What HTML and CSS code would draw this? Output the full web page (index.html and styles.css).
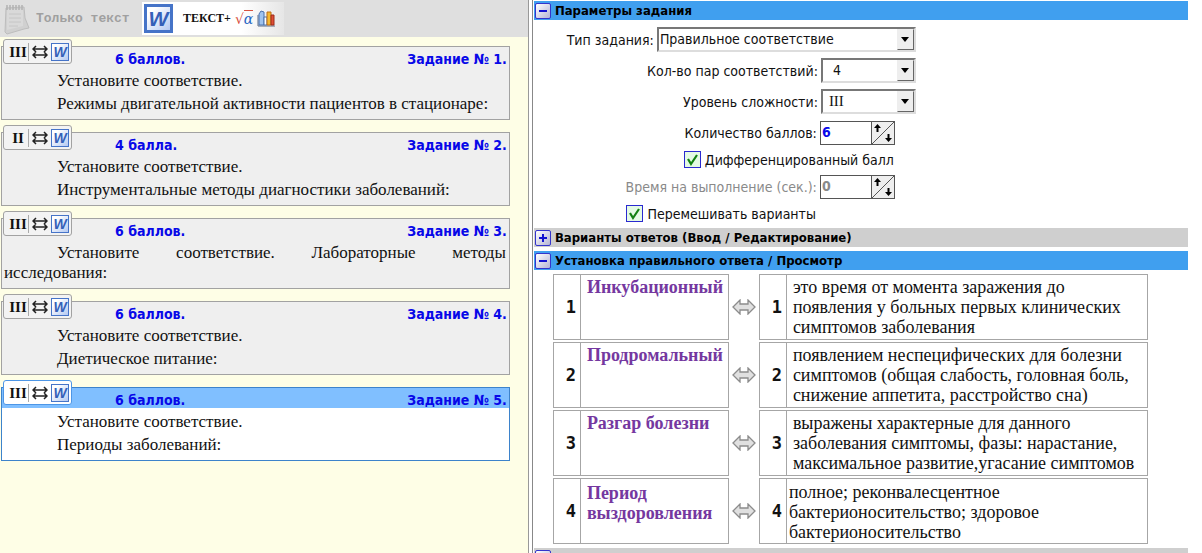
FILE: index.html
```html
<!DOCTYPE html>
<html lang="ru">
<head>
  <meta charset="UTF-8">
  <meta name="viewport" content="width=device-width, initial-scale=1.0">
  <title>Редактор тестов</title>
  <link rel="stylesheet" href="styles.css">
</head>
<body>

  <!-- Shared icons -->
  <svg class="sprite" width="0" height="0" aria-hidden="true">
    <symbol id="match" viewBox="0 0 16 14">
      <path d="M1 4h14M4 1L1 4l3 3M12 1l3 3-3 3M1 10h14M4 7L1 10l3 3M12 7l3 3-3 3" fill="none" stroke="#222" stroke-width="1.500"></path>
    </symbol>
    <symbol id="pair" viewBox="0 0 24 16">
      <path d="M1 8l7-7v4h8V1l7 7-7 7v-4H8v4z" fill="#e0e0e0" stroke="#8c8c8c" stroke-width="1.300"></path>
    </symbol>
    <symbol id="drop" viewBox="0 0 8 5">
      <path d="M0 0h8L4 5z" fill="#000"></path>
    </symbol>
    <symbol id="up" viewBox="0 0 7 8">
      <path d="M3.500 0L7 4H4.500v4h-2V4H0z" fill="#000"></path>
    </symbol>
    <symbol id="down" viewBox="0 0 7 8">
      <path d="M3.500 8L7 4H4.500V0h-2v4H0z" fill="#000"></path>
    </symbol>
    <symbol id="tick" viewBox="0 0 15 15">
      <path d="M3 7l3 5 6-9" fill="none" stroke="#128212" stroke-width="2.200"></path>
    </symbol>
  </svg>

  <main class="app">
    <section class="tasks">
      <div class="toolbar">
        <button class="mode" disabled>
          <svg class="notepad" width="28" height="32" viewBox="0 0 28 32">
            <path d="M4 5l18-1 1 11 4 10-5 1-17 5-2-2z" fill="#d0d0d0" stroke="#bdbdbd"></path>
            <path d="M5 6h16v17l-16 4z" fill="#d9d9d9"></path>
            <path d="M5 2v5M8 2v5M11 2v5M14 2v5M17 2v5M20 2v5" stroke="#b3b3b3" stroke-width="1.500"></path>
            <path d="M7 11h12M7 15h12M7 19h12M7 23h9" stroke="#c6c6c6"></path>
          </svg>
          <span class="mode-plain">Только текст</span>
        </button>
        <button class="mode mode-active">
          <span class="word word-big">W</span>
          <span class="mode-rich">ТЕКСТ+</span>
          <span class="formula">√<i>α</i></span>
          <svg class="chart" width="19" height="17" viewBox="0 0 19 17">
            <path d="M1 5v11h17" fill="none" stroke="#5d6c86"></path>
            <path d="M2 4l2-3 3 1v13H2z" fill="#9fc3ee" stroke="#4b72ad"></path>
            <path d="M7 7h3v8H7z" fill="#fff" stroke="#4b72ad"></path>
            <path d="M10 2h4v13h-4z" fill="#f5b92e" stroke="#bd6d16"></path>
            <path d="M14 5h3v10h-3z" fill="#e04f35" stroke="#9b2c1c"></path>
          </svg>
        </button>
      </div>

      <div class="task-list">
        <article class="task">
          <div class="badge"><b>III</b><svg width="16" height="14"><use href="#match"></use></svg><span class="word">W</span></div>
          <header class="task-head"><span>6 баллов.</span><span>Задание № 1.</span></header>
          <div class="task-text">
            <p>Установите соответствие.</p>
            <p>Режимы двигательной активности пациентов в стационаре:</p>
          </div>
        </article>

        <article class="task">
          <div class="badge"><b>II</b><svg width="16" height="14"><use href="#match"></use></svg><span class="word">W</span></div>
          <header class="task-head"><span>4 балла.</span><span>Задание № 2.</span></header>
          <div class="task-text">
            <p>Установите соответствие.</p>
            <p>Инструментальные методы диагностики заболеваний:</p>
          </div>
        </article>

        <article class="task">
          <div class="badge"><b>III</b><svg width="16" height="14"><use href="#match"></use></svg><span class="word">W</span></div>
          <header class="task-head"><span>6 баллов.</span><span>Задание № 3.</span></header>
          <div class="task-text">
            <p>Установите соответствие. Лабораторные методы исследования:</p>
          </div>
        </article>

        <article class="task">
          <div class="badge"><b>III</b><svg width="16" height="14"><use href="#match"></use></svg><span class="word">W</span></div>
          <header class="task-head"><span>6 баллов.</span><span>Задание № 4.</span></header>
          <div class="task-text">
            <p>Установите соответствие.</p>
            <p>Диетическое питание:</p>
          </div>
        </article>

        <article class="task task-current">
          <div class="badge"><b>III</b><svg width="16" height="14"><use href="#match"></use></svg><span class="word">W</span></div>
          <header class="task-head"><span>6 баллов.</span><span>Задание № 5.</span></header>
          <div class="task-text">
            <p>Установите соответствие.</p>
            <p>Периоды заболеваний:</p>
          </div>
        </article>
      </div>
    </section>

    <section class="editor">
      <button class="bar bar-open"><span class="toggle minus"></span>Параметры задания</button>

      <form class="params">
        <div class="row">
          <label for="type">Тип задания:</label>
          <span class="select select-wide">
            <select id="type"><option>Правильное соответствие</option></select>
            <span class="arrow"><svg width="8" height="5"><use href="#drop"></use></svg></span>
          </span>
        </div>
        <div class="row">
          <label for="pairs">Кол-во пар соответствий:</label>
          <span class="select">
            <select id="pairs" class="indent"><option>4</option></select>
            <span class="arrow"><svg width="8" height="5"><use href="#drop"></use></svg></span>
          </span>
        </div>
        <div class="row">
          <label for="level">Уровень сложности:</label>
          <span class="select">
            <select id="level" class="roman"><option>III</option></select>
            <span class="arrow"><svg width="8" height="5"><use href="#drop"></use></svg></span>
          </span>
        </div>
        <div class="row row-spin">
          <label for="points">Количество баллов:</label>
          <span class="spin">
            <input type="text" id="points" value="6">
            <span class="steps">
              <button type="button" aria-label="Больше"><svg width="7" height="8"><use href="#up"></use></svg></button>
              <button type="button" aria-label="Меньше"><svg width="7" height="8"><use href="#down"></use></svg></button>
            </span>
          </span>
        </div>
        <div class="row row-check">
          <label><span class="check"><input type="checkbox" checked><svg width="15" height="15"><use href="#tick"></use></svg></span>Дифференцированный балл</label>
        </div>
        <div class="row row-spin">
          <label for="time" class="off">Время на выполнение (сек.):</label>
          <span class="spin">
            <input type="text" id="time" value="0" disabled>
            <span class="steps">
              <button type="button" aria-label="Больше"><svg width="7" height="8"><use href="#up"></use></svg></button>
              <button type="button" aria-label="Меньше"><svg width="7" height="8"><use href="#down"></use></svg></button>
            </span>
          </span>
        </div>
        <div class="row row-shuffle">
          <label><span class="check"><input type="checkbox" checked><svg width="15" height="15"><use href="#tick"></use></svg></span>Перемешивать варианты</label>
        </div>
      </form>

      <button class="bar"><span class="toggle plus"></span>Варианты ответов (Ввод / Редактирование)</button>
      <button class="bar bar-open"><span class="toggle minus"></span>Установка правильного ответа / Просмотр</button>

      <table class="answers">
        <tr>
          <td class="num">1</td>
          <td class="term">Инкубационный</td>
          <td class="link"><svg width="24" height="16"><use href="#pair"></use></svg></td>
          <td class="num">1</td>
          <td class="meaning">это время от момента заражения до<br>появления у больных первых клинических<br>симптомов заболевания</td>
        </tr>
        <tr>
          <td class="num">2</td>
          <td class="term">Продромальный</td>
          <td class="link"><svg width="24" height="16"><use href="#pair"></use></svg></td>
          <td class="num">2</td>
          <td class="meaning">появлением неспецифических для болезни<br>симптомов (общая слабость, головная боль,<br>снижение аппетита, расстройство сна)</td>
        </tr>
        <tr>
          <td class="num">3</td>
          <td class="term">Разгар болезни</td>
          <td class="link"><svg width="24" height="16"><use href="#pair"></use></svg></td>
          <td class="num">3</td>
          <td class="meaning">выражены характерные для данного<br>заболевания симптомы, фазы: нарастание,<br>максимальное развитие,угасание симптомов</td>
        </tr>
        <tr class="last">
          <td class="num">4</td>
          <td class="term">Период<br>выздоровления</td>
          <td class="link"><svg width="24" height="16"><use href="#pair"></use></svg></td>
          <td class="num">4</td>
          <td class="meaning">полное; реконвалесцентное<br>бактерионосительство; здоровое<br>бактерионосительство</td>
        </tr>
      </table>

      <button class="bar" aria-label="Дополнительно"><span class="toggle plus"></span></button>
    </section>
  </main>

</body>
</html>
```

FILE: styles.css
```css
* {
  box-sizing: border-box;
}

body {
  margin: 0;
  background-color: #fff;
  color: #111;
  font-family: "DejaVu Sans Condensed", "DejaVu Sans", sans-serif;
  font-size: 14px;
}

button {
  font: inherit;
  color: inherit;
  border: none;
  background: none;
  padding: 0;
}

.sprite {
  position: absolute;
}

.app {
  display: grid;
  grid-template-columns: 44fr 56fr;
  height: 100vh;
  overflow: hidden;
}

/* Left side: task list */
.tasks {
  background-color: #fefee6;
  border-right: 1px solid #999;
}

.toolbar {
  display: flex;
  gap: 2px;
  height: 37px;
  background-color: #dfdfdf;
}

.mode {
  display: flex;
  align-items: center;
  gap: 6px;
  width: 140px;
  padding-left: 2px;
}

.mode-active {
  gap: 4px;
  width: 142px;
  height: 33px;
  margin-top: 2px;
  background: linear-gradient(to right, #fff 70%, #e6e6e6);
}

.mode-plain {
  font: bold 13px "Liberation Mono", monospace;
  color: #a0a0a0;
  white-space: nowrap;
}

.mode-rich {
  margin-left: 6px;
  font: bold 12px "Liberation Serif", serif;
}

.formula {
  color: #d8513f;
  font: 14px "DejaVu Serif", serif;
}

.formula i {
  color: #2867c4;
  border-top: 1px solid #d8513f;
}

/* Word document mark */
.word {
  width: 18px;
  height: 18px;
  border: 1px solid #4674c8;
  background: linear-gradient(135deg, #fff 20%, #b4c9f2);
  color: #3560b8;
  font: italic bold 14px/16px "Liberation Sans", sans-serif;
  text-align: center;
}

.word-big {
  width: 29px;
  height: 29px;
  border-width: 3px;
  font-size: 21px;
  line-height: 23px;
}

.task-list {
  display: flex;
  flex-direction: column;
  gap: 12px;
  padding: 9px 18px 0 1px;
}

.task {
  position: relative;
  border: 1px solid #a2a2a2;
  background-color: #efefef;
}

.task-head {
  display: flex;
  justify-content: space-between;
  height: 20px;
  padding: 3px 2px 0 113px;
  color: #0808e8;
  font-weight: bold;
  line-height: 18px;
}

.task-text {
  padding: 4px 3px 5px 2px;
  font: 17px/20px "Liberation Serif", serif;
  text-align: justify;
}

.task-text p {
  margin: 0;
  text-indent: 53px;
}

.task-text p + p {
  margin-top: 3px;
}

.badge {
  position: absolute;
  top: -8px;
  left: 1px;
  display: flex;
  align-items: center;
  gap: 3px;
  width: 69px;
  height: 25px;
  padding: 0 1px 0 4px;
  border: 1px solid #a2a2a2;
  border-radius: 3px;
  background-color: #f3f3f3;
}

.badge b {
  width: 21px;
  border-right: 1px solid #aaa;
  font: bold 15px/18px "Liberation Serif", serif;
  text-align: center;
}

.task-current {
  border-color: #3d83cb;
  background-color: #fff;
}

.task-current .task-head {
  background-color: #80bfff;
}

.task-current .badge {
  border-color: #4d96e6;
  background-color: #fff;
}

/* Right side: editor */
.editor {
  margin-left: 3px;
  padding: 1px 14px 0 1px;
  border-left: 1px solid #888;
}

.bar {
  display: flex;
  align-items: center;
  gap: 4px;
  width: 100%;
  height: 19px;
  margin-bottom: 4px;
  padding-left: 1px;
  background-color: #cfcfcf;
  color: #000;
  font-size: 13px;
  font-weight: bold;
}

.bar-open {
  background-color: #409fef;
}

.toggle {
  width: 16px;
  height: 16px;
  border: 1px solid #3434cc;
  border-radius: 2px;
  background: linear-gradient(#1414d0, #1414d0) center / 8px 2px no-repeat, linear-gradient(135deg, #fff, #b4b4d4);
}

.toggle.plus {
  background: linear-gradient(#1414d0, #1414d0) center / 8px 2px no-repeat, linear-gradient(#1414d0, #1414d0) center / 2px 8px no-repeat, linear-gradient(135deg, #fff, #b4b4d4);
}

.params {
  display: flex;
  flex-direction: column;
  gap: 6px;
  width: 382px;
  padding: 3px 0 6px;
}

.row {
  display: flex;
  align-items: center;
  justify-content: flex-end;
  gap: 3px;
  height: 25px;
}

.row-spin {
  padding-right: 21px;
}

.row-check,
.row-shuffle {
  height: 17px;
  padding-right: 22px;
}

.row-shuffle {
  padding-right: 100px;
}

.row label {
  display: flex;
  align-items: center;
  gap: 4px;
}

.off {
  color: #8a8a8a;
}

.select {
  position: relative;
  display: flex;
  width: 95px;
  height: 25px;
}

.select-wide {
  width: 259px;
}

.select select {
  appearance: none;
  width: 100%;
  padding: 0 22px 2px 1px;
  border: 2px solid;
  border-color: #777 #ddd #ddd #777;
  border-radius: 0;
  background-color: #fff;
  color: #111;
  font: inherit;
}

.select .indent {
  padding-left: 10px;
}

.select .roman {
  padding-left: 6px;
  font: 15px "Liberation Serif", serif;
}

.arrow {
  position: absolute;
  top: 2px;
  right: 2px;
  bottom: 2px;
  display: flex;
  align-items: center;
  justify-content: center;
  width: 17px;
  border: 1px solid;
  border-color: #eee #666 #666 #eee;
  background-color: #eee;
  pointer-events: none;
}

.spin {
  display: flex;
  width: 75px;
  height: 24px;
  border: 1px solid #555;
}

.spin input {
  flex: 1;
  min-width: 0;
  padding: 0 1px 2px;
  border: none;
  background-color: #fff;
  color: #0808e8;
  font: bold 14px "DejaVu Sans Condensed", sans-serif;
}

.spin input:disabled {
  color: #8a8a8a;
}

.steps {
  display: flex;
  justify-content: space-between;
  width: 23px;
  padding: 2px;
  border-left: 1px solid #555;
  background: linear-gradient(to bottom right, #eee 48%, #555 49%, #555 51%, #eee 52%);
}

.steps button {
  display: flex;
  align-self: flex-start;
}

.steps button + button {
  align-self: flex-end;
}

.check {
  display: grid;
  place-items: center;
}

.check input,
.check svg {
  grid-area: 1 / 1;
}

.check input {
  appearance: none;
  width: 17px;
  height: 17px;
  margin: 0;
  border: 1px solid #2a2ad0;
  background-color: #e4fbe4;
}

.check svg {
  pointer-events: none;
}

.check input:not(:checked) + svg {
  visibility: hidden;
}

/* Pairs of answers */
.answers {
  width: 595px;
  margin: -2px 0 2px 19px;
  border-collapse: separate;
  border-spacing: 0 2px;
  table-layout: fixed;
  font: 18px/20px "Liberation Serif", serif;
}

.answers td {
  height: 66px;
  padding: 2px 0 0 6px;
  border: 1px solid #a6a6a6;
  vertical-align: top;
}

.answers .num {
  width: 27px;
  padding: 0 4px 0 0;
  border-right: none;
  font: bold 17px "DejaVu Sans Mono", monospace;
  text-align: right;
  vertical-align: middle;
}

.answers .term {
  width: 149px;
  color: #7538a0;
  font-weight: bold;
}

.answers .link {
  width: 30px;
  padding: 0;
  border: none;
  text-align: center;
  vertical-align: middle;
}

.link svg {
  display: block;
  margin: 0 auto;
}

.answers .last .term {
  padding-top: 4px;
}

.answers .last .meaning {
  padding: 3px 0 0 2px;
}
```
